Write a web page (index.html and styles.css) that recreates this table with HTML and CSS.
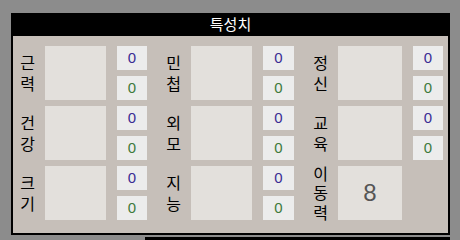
FILE: index.html
```html
<!DOCTYPE html>
<html lang="ko">
<head>
    <meta charset="UTF-8">
    <title>특성치</title>
    <link rel="stylesheet" href="styles.css">
</head>
<body>

    <div class="window">
        <div class="title">특성치</div>

        <!-- 특성치 표: 이름 / 값 / 보정치 두 칸 -->
        <div class="stats">
            <div class="label"><span>근<br>력</span></div>
            <div class="value"></div>
            <div class="pair"><div class="num base">0</div><div class="num bonus">0</div></div>

            <div class="label"><span>민<br>첩</span></div>
            <div class="value"></div>
            <div class="pair"><div class="num base">0</div><div class="num bonus">0</div></div>

            <div class="label"><span>정<br>신</span></div>
            <div class="value"></div>
            <div class="pair"><div class="num base">0</div><div class="num bonus">0</div></div>

            <div class="label"><span>건<br>강</span></div>
            <div class="value"></div>
            <div class="pair"><div class="num base">0</div><div class="num bonus">0</div></div>

            <div class="label"><span>외<br>모</span></div>
            <div class="value"></div>
            <div class="pair"><div class="num base">0</div><div class="num bonus">0</div></div>

            <div class="label"><span>교<br>육</span></div>
            <div class="value"></div>
            <div class="pair"><div class="num base">0</div><div class="num bonus">0</div></div>

            <div class="label"><span>크<br>기</span></div>
            <div class="value"></div>
            <div class="pair"><div class="num base">0</div><div class="num bonus">0</div></div>

            <div class="label"><span>지<br>능</span></div>
            <div class="value"></div>
            <div class="pair"><div class="num base">0</div><div class="num bonus">0</div></div>

            <div class="label tall"><span>이<br>동<br>력</span></div>
            <div class="value move">8</div>
            <div class="pair"></div>
        </div>
    </div>

    <!-- 아래 창 (윗부분만 보임) -->
    <div class="window next"></div>

</body>
</html>
```

FILE: styles.css
```css
body {
    margin: 0;
    padding: 0;
    background-color: #8c8c8c;
    font-family: 'Noto Sans CJK KR', 'Noto Sans', sans-serif;
    color: #000;
    overflow: hidden;
}
.window {
    width: 435px;
    margin: 13px 0 0 11px;
    border: 2px solid #000;
    background-color: #c6bfb9;
}
.title {
    height: 21px;
    line-height: 18px;
    background-color: #000;
    color: #fff;
    text-align: center;
    font-size: 15px;
}
.stats {
    display: grid;
    grid-template-columns: 32px 61px 41px 44px 61px 42px 44px 64px 41px;
    grid-template-rows: 54px 54px 54px;
    row-gap: 6px;
    padding: 10px 5px 13px 0;
}
.label {
    display: flex;
    align-items: center;
    justify-content: flex-end;
    padding-right: 10px;
    font-size: 16px;
    line-height: 21px;
}
.label span {
    text-align: center;
}
.label.tall {
    line-height: 19.5px;
}
.value {
    background-color: #e3e0dc;
}
.value.move {
    display: flex;
    align-items: center;
    justify-content: center;
    font-family: 'Liberation Sans', sans-serif;
    font-size: 24px;
    color: #555;
}
.pair {
    display: flex;
    flex-direction: column;
    gap: 6px;
    margin-left: 11px;
}
.num {
    height: 24px;
    line-height: 24px;
    background-color: #ececec;
    text-align: center;
    font-family: 'Liberation Sans', sans-serif;
    font-size: 15px;
}
.num.base {
    color: #3b2c94;
}
.num.bonus {
    color: #3f7a3c;
}
.window.next {
    width: 305px;
    height: 3px;
    margin: 2px 0 0 145px;
    border: none;
    background-color: #000;
}
```
